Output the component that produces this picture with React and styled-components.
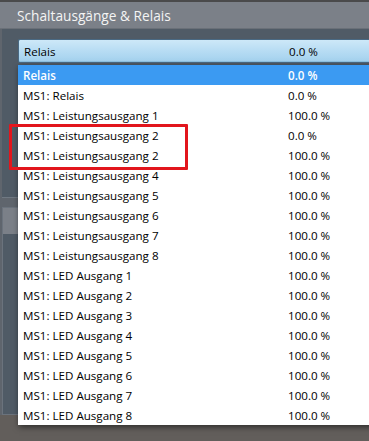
import styled, { createGlobalStyle } from "styled-components";

const Global = createGlobalStyle`
    html, body {
        margin: 0;
        padding: 0;
        background: #625e5b;
    }
    * { box-sizing: border-box; }
`;

const items = [
    { name: "Relais", value: "0.0 %", selected: true },
    { name: "MS1: Relais", value: "0.0 %" },
    { name: "MS1: Leistungsausgang 1", value: "100.0 %" },
    { name: "MS1: Leistungsausgang 2", value: "0.0 %" },
    { name: "MS1: Leistungsausgang 2", value: "100.0 %" },
    { name: "MS1: Leistungsausgang 4", value: "100.0 %" },
    { name: "MS1: Leistungsausgang 5", value: "100.0 %" },
    { name: "MS1: Leistungsausgang 6", value: "100.0 %" },
    { name: "MS1: Leistungsausgang 7", value: "100.0 %" },
    { name: "MS1: Leistungsausgang 8", value: "100.0 %" },
    { name: "MS1: LED Ausgang 1", value: "100.0 %" },
    { name: "MS1: LED Ausgang 2", value: "100.0 %" },
    { name: "MS1: LED Ausgang 3", value: "100.0 %" },
    { name: "MS1: LED Ausgang 4", value: "100.0 %" },
    { name: "MS1: LED Ausgang 5", value: "100.0 %" },
    { name: "MS1: LED Ausgang 6", value: "100.0 %" },
    { name: "MS1: LED Ausgang 7", value: "100.0 %" },
    { name: "MS1: LED Ausgang 8", value: "100.0 %" },
];

export default function App() {
    return (
        <Screen>
            <Global />
            <TopStrip />
            <TitleBar>Schaltausgänge &amp; Relais</TitleBar>
            <Body>
                <Panel>
                    <Combo>
                        <Label>Relais</Label>
                        <Value>0.0 %</Value>
                    </Combo>
                </Panel>
                <Panel2>
                    <PanelHeader />
                </Panel2>
            </Body>

            <DropList>
                {items.map((it, i) => (
                    <Row key={i} $selected={it.selected}>
                        <Label>{it.name}</Label>
                        <Value>{it.value}</Value>
                    </Row>
                ))}
            </DropList>

            <Marker />
        </Screen>
    );
}

const Screen = styled.div`
    position: relative;
    width: 369px;
    height: 441px;
    overflow: hidden;
    display: flex;
    flex-direction: column;
    background: #625e5b;
    font-family: "Open Sans", "Noto Sans", Arial, sans-serif;
`;

const TopStrip = styled.div`
    height: 2px;
    background: #4a4a4b;
`;

const TitleBar = styled.div`
    height: 27px;
    background: #7b8088;
    color: #f4f4f4;
    font-size: 13.7px;
    padding-left: 17px;
    display: flex;
    align-items: center;
    border-bottom: 1px solid #6a7078;
`;

const Body = styled.div`
    display: flex;
    flex-direction: column;
    padding-left: 2px;
    background: #5f656d;
`;

const Panel = styled.div`
    height: 169px;
    background: #505b66;
    border-bottom: 1px solid #707983;
    padding: 10px 0 0 16px;
`;

const Panel2 = styled.div`
    margin-top: 9px;
    height: 208px;
    background: #505b66;
    border: 1px solid #6b737d;
    border-right: none;
`;

const PanelHeader = styled.div`
    height: 26px;
    background: #7b8088;
`;

const Combo = styled.div`
    height: 24px;
    display: flex;
    align-items: center;
    padding-left: 5px;
    border: 1px solid #4a6a84;
    border-right: none;
    border-radius: 2px 0 0 2px;
    background: linear-gradient(#cde8f8, #b7dcf3 50%, #a3d1ee);
    box-shadow: inset 0 -1px 0 #8ec2e2;
    color: #000;
    font-size: 11.6px;
`;

const Label = styled.span`
    width: 265px;
    white-space: nowrap;
`;

const Value = styled.span`
    white-space: nowrap;
`;

const DropList = styled.div`
    position: absolute;
    left: 18px;
    top: 65px;
    width: 360px;
    background: #ffffff;
    box-shadow: 1px 2px 6px rgba(0, 0, 0, 0.55);
    display: flex;
    flex-direction: column;
`;

const Row = styled.div`
    height: 20px;
    display: flex;
    align-items: center;
    padding-left: 5px;
    font-size: 11.6px;
    color: ${(p) => (p.$selected ? "#ffffff" : "#000000")};
    background: ${(p) => (p.$selected ? "#3b9af2" : "transparent")};
    font-weight: ${(p) => (p.$selected ? 600 : 400)};
`;

const Marker = styled.div`
    position: absolute;
    left: 9px;
    top: 124px;
    width: 179px;
    height: 46px;
    border: 3px solid #e2161d;
    border-radius: 1px;
`;
